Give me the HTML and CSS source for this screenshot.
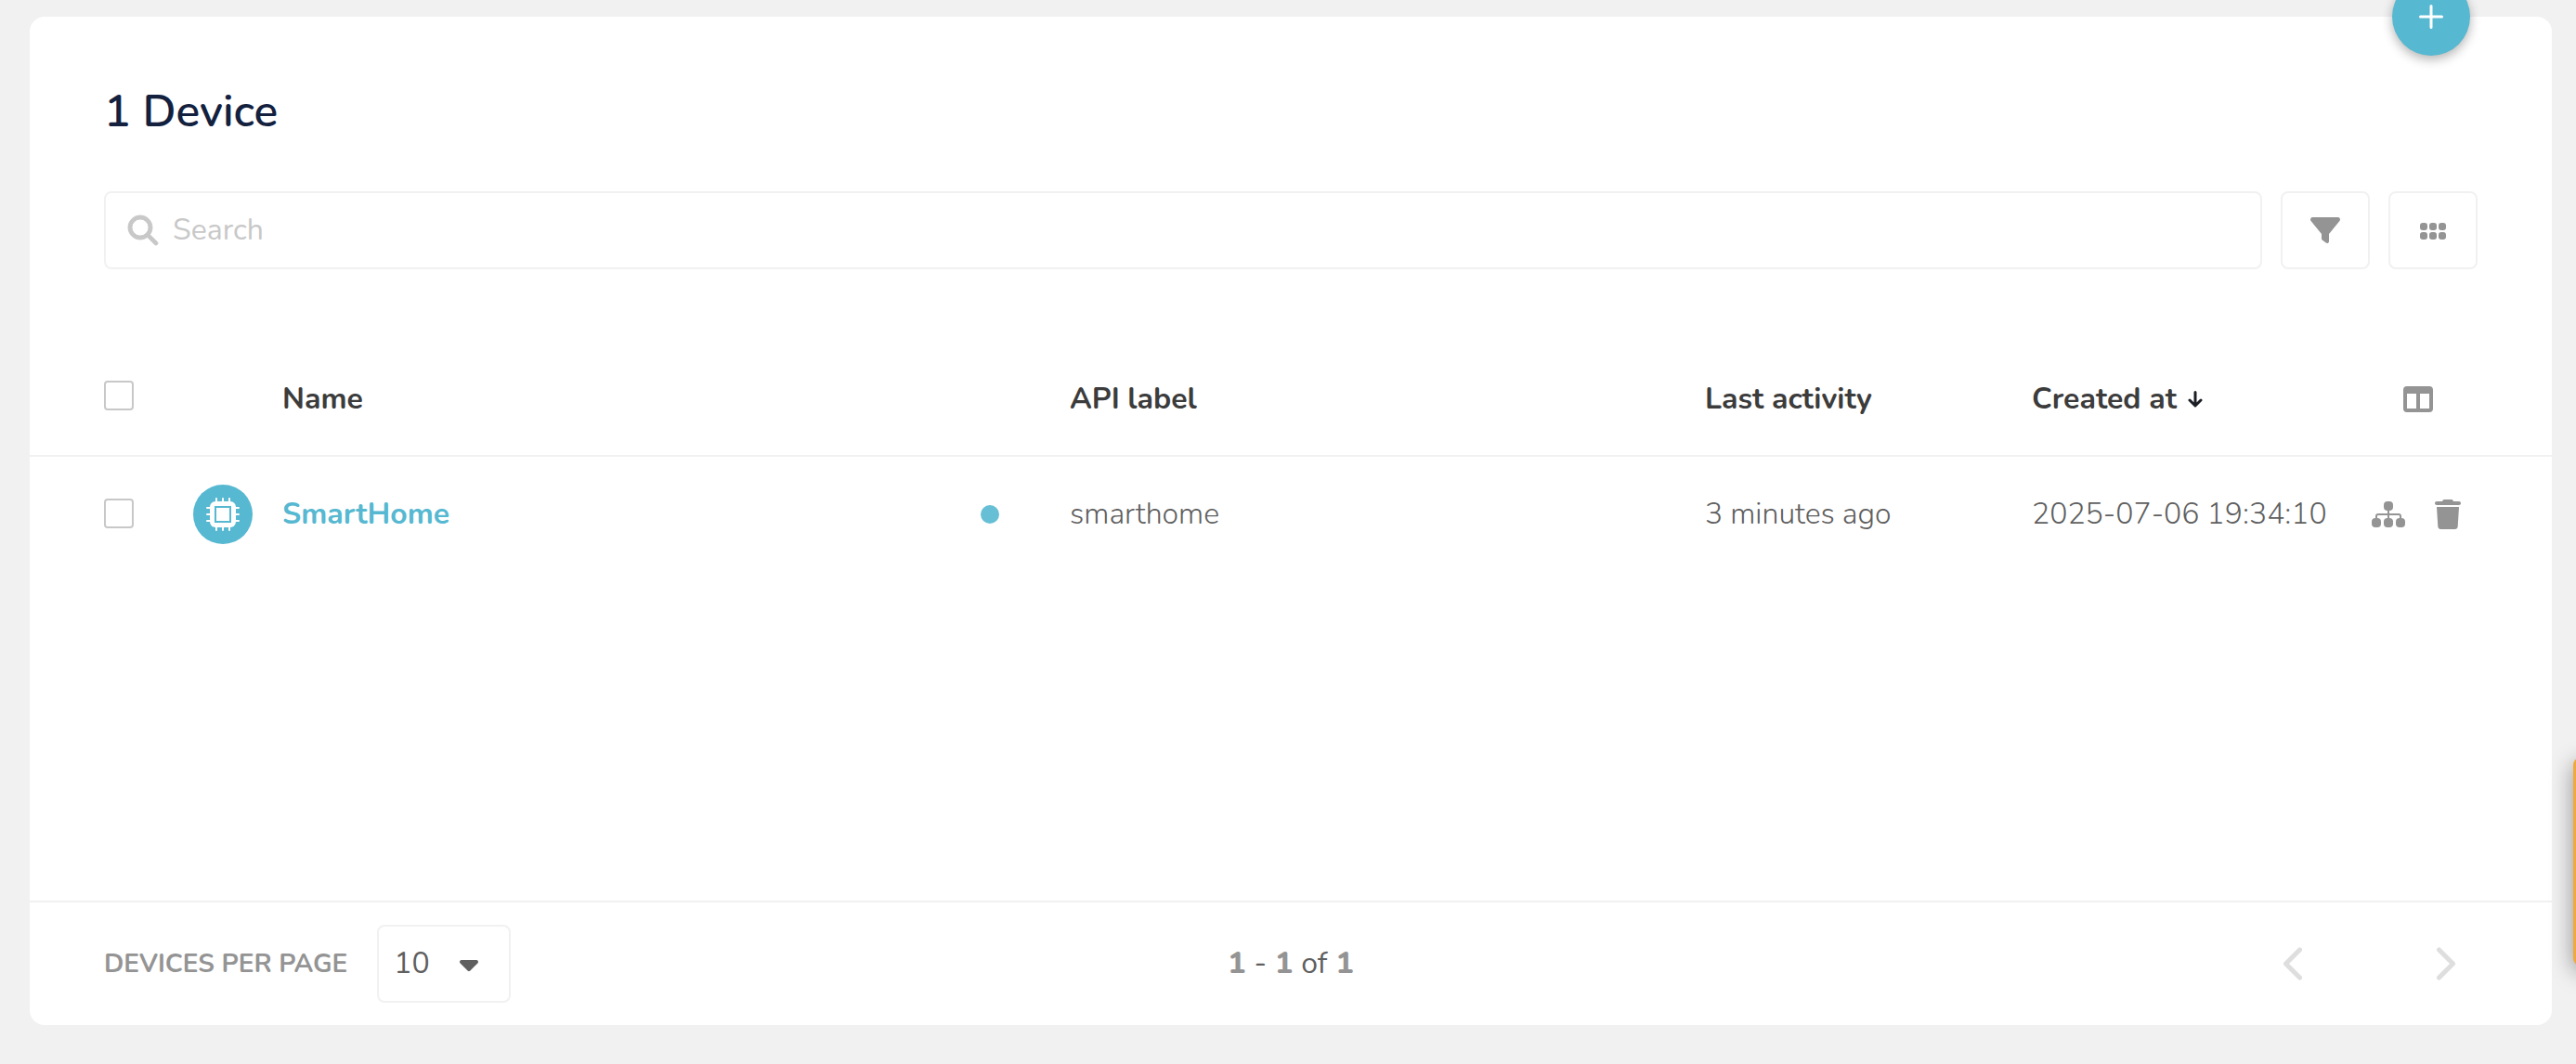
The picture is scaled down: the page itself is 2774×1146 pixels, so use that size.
FILE: index.html
```html
<!DOCTYPE html>
<html lang="en">
<head>
<meta charset="utf-8">
<meta name="viewport" content="width=device-width, initial-scale=1">
<title>Devices</title>
<link rel="stylesheet" href="styles.css">
</head>
<body>
<main class="page">
  <section class="card">
    <button class="fab" type="button" aria-label="Add device">
      <svg width="26" height="26" viewBox="0 0 26 26" fill="none" stroke="currentColor" stroke-width="3" stroke-linecap="round"><path d="M13 1.500v23M1.500 13h23"/></svg>
    </button>

    <h1 class="title">1 Device</h1>

    <div class="toolbar">
      <label class="search">
        <svg width="32" height="32" viewBox="0 0 512 512" fill="currentColor" stroke="currentColor" stroke-width="14" overflow="visible" aria-hidden="true"><path d="M416 208c0 45.900-14.900 88.300-40 122.700L502.600 457.400c12.500 12.500 12.500 32.800 0 45.300s-32.800 12.500-45.300 0L330.700 376c-34.400 25.200-76.800 40-122.700 40C93.100 416 0 322.900 0 208S93.100 0 208 0S416 93.100 416 208zM208 352a144 144 0 1 0 0-288 144 144 0 1 0 0 288z"/></svg>
        <input class="search-input" type="text" placeholder="Search" aria-label="Search">
      </label>
      <button class="tool" type="button" aria-label="Filter">
        <svg width="32" height="32" viewBox="0 0 512 512" fill="currentColor"><path d="M3.900 54.900C10.500 40.900 24.500 32 40 32H472c15.500 0 29.500 8.900 36.100 22.900s4.600 30.500-5.200 42.500L320 320.900V448c0 12.100-6.800 23.200-17.700 28.600s-23.800 4.300-33.500-3l-64-48c-8.100-6-12.800-15.500-12.800-25.600V320.900L9 97.300C-.7 85.400-2.800 68.800 3.900 54.900z"/></svg>
      </button>
      <button class="tool" type="button" aria-label="Grid view">
        <svg width="28" height="20" viewBox="0 0 28 20" fill="currentColor"><rect y="2" width="8" height="8" rx="3"/><rect x="10" y="2" width="8" height="8" rx="3"/><rect x="20" y="2" width="8" height="8" rx="3"/><rect y="12" width="8" height="8" rx="3"/><rect x="10" y="12" width="8" height="8" rx="3"/><rect x="20" y="12" width="8" height="8" rx="3"/></svg>
      </button>
    </div>

    <div class="list">
      <table class="devices">
        <colgroup>
          <col class="col-check"><col class="col-icon"><col class="col-name"><col class="col-label"><col class="col-activity"><col class="col-created"><col class="col-actions">
        </colgroup>
        <thead>
          <tr>
            <th class="check-cell"><input class="check" type="checkbox" aria-label="Select all devices"></th>
            <th></th>
            <th>Name</th>
            <th>API label</th>
            <th>Last activity</th>
            <th>
              <span class="sorted">Created at
                <svg width="16" height="18" viewBox="0 0 16 18" fill="none" stroke="#1c1e26" stroke-width="3" stroke-linecap="round" stroke-linejoin="round" aria-hidden="true"><path d="M8 1.500v14M2 10l6 6 6-6"/></svg>
              </span>
            </th>
            <th class="columns-cell">
              <button class="icon-button" type="button" aria-label="Choose columns">
                <svg width="32" height="28" viewBox="0 0 32 28" fill="currentColor"><path fill-rule="evenodd" d="M4 0H28A4 4 0 0 1 32 4V24A4 4 0 0 1 28 28H4A4 4 0 0 1 0 24V4A4 4 0 0 1 4 0ZM4 8V24H14V8ZM18 8V24H28V8Z"/></svg>
              </button>
            </th>
          </tr>
        </thead>
        <tbody>
          <tr>
            <td class="check-cell"><input class="check" type="checkbox" aria-label="Select SmartHome"></td>
            <td>
              <span class="avatar">
                <svg width="36" height="36" viewBox="0 0 36 36" aria-hidden="true"><path d="M11 1v34M18 1v34M25 1v34M1 11h34M1 18h34M1 25h34" stroke="#fff" stroke-width="2" stroke-linecap="round"/><rect x="4" y="4" width="28" height="28" rx="6" fill="#fff"/><rect x="10" y="10" width="16" height="16" fill="none" stroke="#56b8d1" stroke-width="2"/></svg>
              </span>
            </td>
            <td>
              <div class="name">
                <a class="device-link" href="#smarthome">SmartHome</a>
                <span class="status"></span>
              </div>
            </td>
            <td>smarthome</td>
            <td>3 minutes ago</td>
            <td>2025-07-06 19:34:10</td>
            <td>
              <div class="actions">
                <button class="icon-button" type="button" aria-label="Assign to group">
                  <svg width="36" height="28" viewBox="0 0 36 28" fill="currentColor"><rect x="13" width="10" height="10" rx="4"/><rect y="18" width="10" height="10" rx="4"/><rect x="13" y="18" width="10" height="10" rx="4"/><rect x="26" y="18" width="10" height="10" rx="4"/><path d="M18 9v10M5 19v-3a2 2 0 0 1 2-2h22a2 2 0 0 1 2 2v3" fill="none" stroke="currentColor" stroke-width="2"/></svg>
                </button>
                <button class="icon-button" type="button" aria-label="Delete">
                  <svg width="28" height="32" viewBox="0 0 448 512" fill="currentColor"><path d="M135.200 17.700C140.600 6.800 151.700 0 163.800 0H284.200c12.100 0 23.200 6.800 28.600 17.700L320 32h96c17.700 0 32 14.300 32 32s-14.300 32-32 32H32C14.300 96 0 81.700 0 64S14.300 32 32 32h96zM32 128H416L394.800 467c-1.600 25.300-22.600 45-47.900 45H101.100c-25.300 0-46.300-19.700-47.900-45z"/></svg>
                </button>
              </div>
            </td>
          </tr>
        </tbody>
      </table>
    </div>

    <footer class="footer">
      <div class="per-page">
        <label class="per-page-label" for="per-page">DEVICES PER PAGE</label>
        <div class="select-box">
          <select id="per-page" class="select"><option>10</option><option>25</option><option>50</option></select>
          <svg class="caret" width="20" height="12" viewBox="0 0 20 12" fill="currentColor" aria-hidden="true"><path d="M2 0h16a2 2 0 0 1 1.400 3.400l-8 8a2 2 0 0 1-2.800 0l-8-8A2 2 0 0 1 2 0z"/></svg>
        </div>
      </div>
      <p class="range"><b>1</b><span>-</span><b>1</b><span>of</span><b>1</b></p>
      <nav class="pager" aria-label="Pages">
        <button class="icon-button" type="button" aria-label="Previous page">
          <svg width="20" height="36" viewBox="0 0 20 36" fill="none" stroke="currentColor" stroke-width="5" stroke-linecap="round" stroke-linejoin="round"><path d="M17.500 3L2.500 18l15 15"/></svg>
        </button>
        <button class="icon-button" type="button" aria-label="Next page">
          <svg width="20" height="36" viewBox="0 0 20 36" fill="none" stroke="currentColor" stroke-width="5" stroke-linecap="round" stroke-linejoin="round"><path d="M2.500 3l15 15-15 15"/></svg>
        </button>
      </nav>
    </footer>
  </section>
  <button class="side-tab" type="button" aria-label="Open help"></button>
</main>
</body>
</html>
```
FILE: styles.css
```css
* {
  box-sizing: border-box;
}

body {
  margin: 0;
  background: #f1f1f1;
  color: #5f5f5f;
  font: 300 32px/44px Nunito, "Open Sans", "Noto Sans", sans-serif;
  overflow: hidden;
}

button {
  padding: 0;
  border: 0;
  background: none;
  color: inherit;
  font: inherit;
}

svg {
  display: block;
  flex: none;
}

.page {
  display: flex;
  min-height: 100vh;
  padding: 18px 26px 42px 32px;
}

.card {
  position: relative;
  display: flex;
  flex: 1;
  flex-direction: column;
  min-width: 0;
  border-radius: 16px;
  background: #fff;
}

.fab {
  position: absolute;
  top: -42px;
  right: 88px;
  display: grid;
  place-items: center;
  width: 84px;
  height: 84px;
  border-radius: 50%;
  background: #56b8d1;
  box-shadow: 0 4px 12px rgba(0, 0, 0, 0.3);
  color: #fff;
}

.title {
  margin: 0;
  padding: 70px 80px 54px;
  color: #13213f;
  font-size: 48px;
  font-weight: 600;
  line-height: 64px;
}

.toolbar {
  display: flex;
  gap: 20px;
  padding: 0 80px;
}

.search {
  display: flex;
  flex: 1;
  align-items: center;
  gap: 16px;
  height: 84px;
  padding: 0 24px;
  border: 2px solid #f1f1f1;
  border-radius: 8px;
  color: #c8c8c8;
}

.search-input {
  flex: 1;
  min-width: 0;
  padding: 0;
  border: 0;
  outline: 0;
  background: none;
  color: #5f5f5f;
  font: inherit;
  font-weight: 400;
}

.search-input::placeholder {
  color: #c8c8c8;
}

.tool {
  display: grid;
  place-items: center;
  width: 96px;
  height: 84px;
  border: 2px solid #f1f1f1;
  border-radius: 8px;
  color: #949494;
}

.list {
  flex: 1;
  padding-top: 74px;
}

.devices {
  width: 100%;
  border-collapse: separate;
  border-spacing: 0;
  table-layout: fixed;
}

.devices th,
.devices td {
  padding: 0;
  text-align: left;
  white-space: nowrap;
}

.devices th {
  height: 128px;
  padding-top: 6px;
  border-bottom: 2px solid #f1f1f1;
  color: #3c3c3c;
  font-weight: 700;
}

.devices td {
  height: 124px;
}

.devices .check-cell {
  padding: 0 0 2px 80px;
}

.col-check {
  width: 176px;
}

.col-icon {
  width: 96px;
}

.col-label {
  width: 684px;
}

.col-activity {
  width: 352px;
}

.col-created {
  width: 366px;
}

.col-actions {
  width: 194px;
}

.check {
  display: block;
  width: 32px;
  height: 32px;
  margin: 0;
  border: 2px solid #c8c8c8;
  border-radius: 4px;
  background: #fff;
  appearance: none;
}

.sorted {
  display: flex;
  align-items: center;
  gap: 12px;
}

.devices .columns-cell {
  padding-left: 34px;
}

.icon-button {
  display: block;
  color: #949494;
}

.avatar {
  display: grid;
  place-items: center;
  width: 64px;
  height: 64px;
  border-radius: 50%;
  background: #56b8d1;
}

.name {
  display: flex;
  align-items: center;
  justify-content: space-between;
  padding-right: 76px;
}

.device-link {
  color: #56b8d1;
  font-weight: 700;
  text-decoration: none;
}

.status {
  width: 20px;
  height: 20px;
  border-radius: 50%;
  background: #67bfd5;
}

.actions {
  display: flex;
  align-items: center;
  gap: 32px;
}

.footer {
  display: grid;
  grid-template-columns: 1fr auto 1fr;
  align-items: center;
  padding: 24px 80px;
  border-top: 2px solid #f1f1f1;
}

.per-page {
  display: flex;
  align-items: center;
  gap: 32px;
}

.per-page-label {
  color: #949494;
  font-size: 28px;
  font-weight: 700;
}

.select-box {
  position: relative;
}

.select {
  display: block;
  width: 144px;
  height: 84px;
  padding: 0 16px;
  border: 2px solid #f1f1f1;
  border-radius: 8px;
  background: #fff;
  color: #5f5f5f;
  font: inherit;
  font-weight: 400;
  appearance: none;
}

.caret {
  position: absolute;
  top: 38px;
  right: 35px;
  pointer-events: none;
}

.range {
  display: flex;
  gap: 9px;
  margin: 0;
  font-weight: 400;
}

.range b {
  color: #949494;
  font-weight: 800;
}

.pager {
  display: flex;
  justify-content: flex-end;
  gap: 145px;
  padding-right: 24px;
}

.pager .icon-button {
  color: #dedede;
}

.side-tab {
  position: fixed;
  top: 816px;
  right: -61px;
  width: 64px;
  height: 224px;
  border-radius: 8px;
  background: #f0a840;
  box-shadow: 0 6px 24px rgba(0, 0, 0, 0.4);
}
```
